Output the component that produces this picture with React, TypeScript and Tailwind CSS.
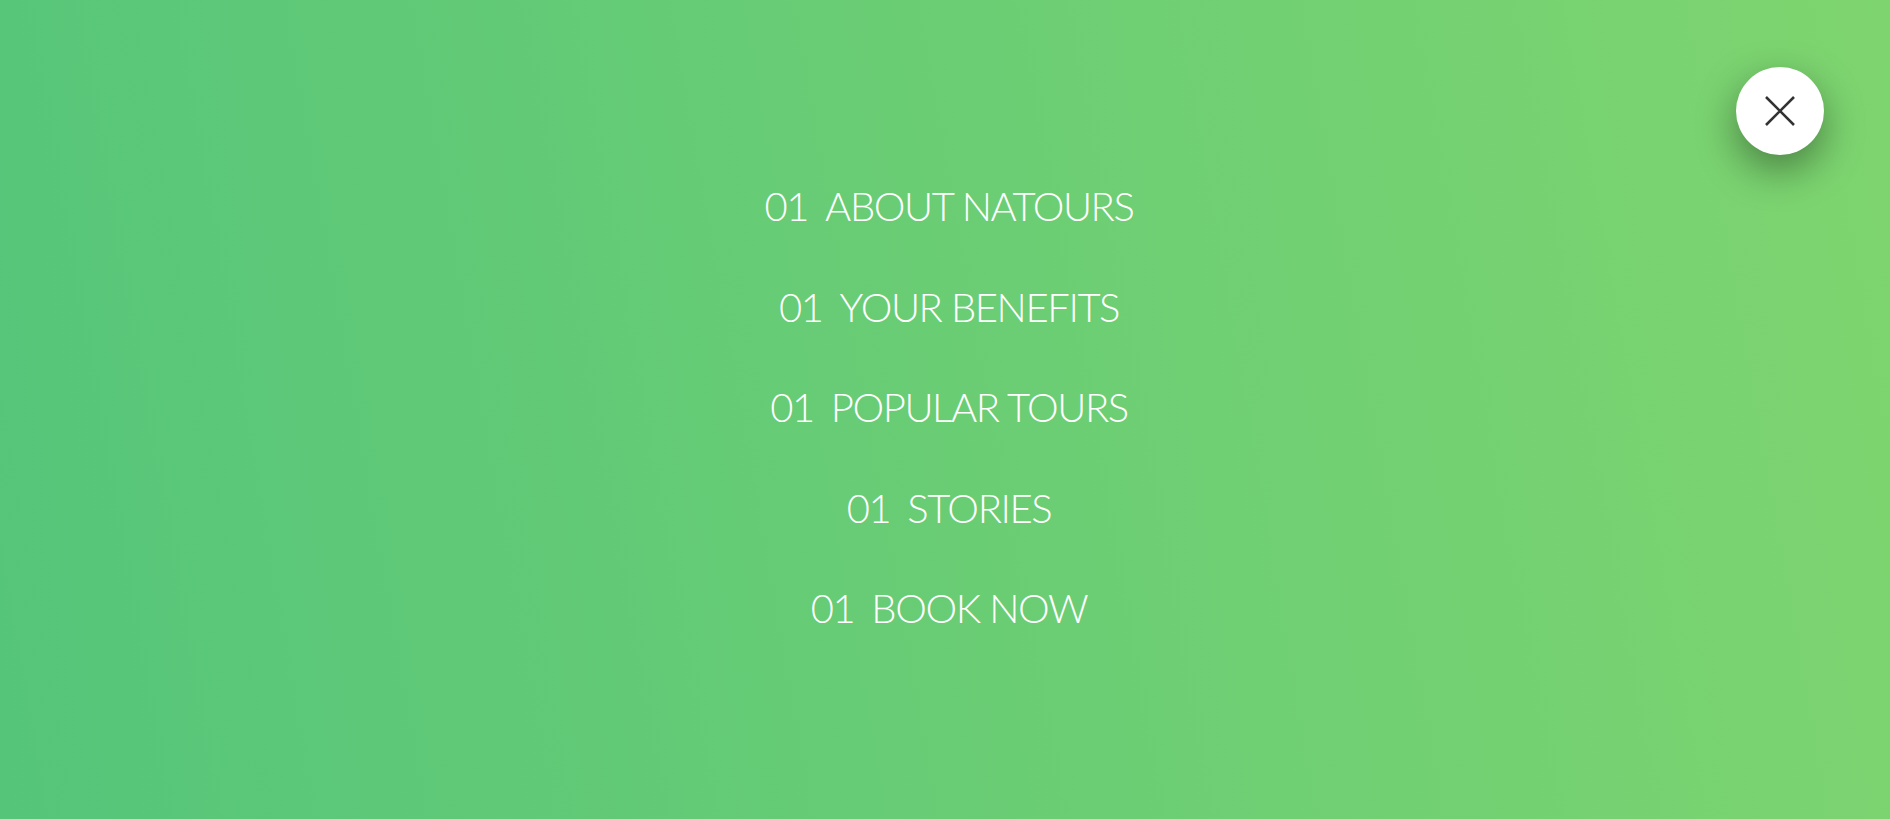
import React from "react";

const links = ["About Natours", "Your benefits", "Popular tours", "Stories", "Book now"];

export default function App() {
  return (
    <div
      className="relative w-full h-[819px] overflow-hidden bg-[linear-gradient(80deg,#55c57a,#7ed56f)]"
      style={{ fontFamily: "Lato, 'Open Sans', sans-serif" }}
    >
      {/* Close button */}
      <button className="absolute top-[67px] right-[66px] w-[88px] h-[88px] rounded-full bg-white flex items-center justify-center shadow-[0_15px_40px_rgba(0,0,0,0.4)]">
        <svg width="32" height="32" viewBox="0 0 32 32" fill="none" stroke="#333" strokeWidth="2.6">
          <path d="M2 2L30 30M30 2L2 30" />
        </svg>
      </button>

      <nav className="h-full flex items-center justify-center pb-[5px] pl-[8px]">
        <ul className="flex flex-col items-center gap-[40.5px]">
          {links.map((item) => (
            <li key={item}>
              <a
                href="#"
                className="block text-white font-light text-[40px] leading-[60px] uppercase tracking-[-1.4px]"
              >
                <span className="mr-[17px]">01</span>
                {item}
              </a>
            </li>
          ))}
        </ul>
      </nav>
    </div>
  );
}
